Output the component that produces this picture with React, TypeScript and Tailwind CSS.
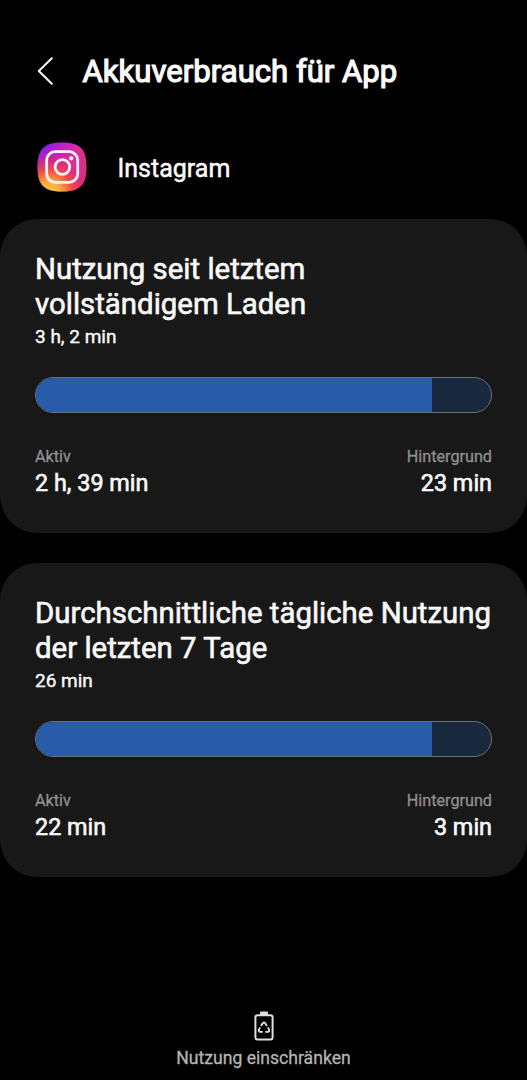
type UsageCardProps = {
  title: string;
  total: string;
  active: string;
  background: string;
  percent: number;
};

const cards: UsageCardProps[] = [
  {
    title: "Nutzung seit letztem vollständigem Laden",
    total: "3 h, 2 min",
    active: "2 h, 39 min",
    background: "23 min",
    percent: 87.1,
  },
  {
    title: "Durchschnittliche tägliche Nutzung der letzten 7 Tage",
    total: "26 min",
    active: "22 min",
    background: "3 min",
    percent: 87.1,
  },
];

function InstagramIcon() {
  return (
    <svg width="50" height="50" viewBox="0 0 50 50">
      <defs>
        <linearGradient id="igBase" x1="0" y1="0" x2="1" y2="0.5">
          <stop offset="0" stopColor="#6a1ff0" />
          <stop offset="0.4" stopColor="#b524c8" />
          <stop offset="0.75" stopColor="#dd2f9a" />
          <stop offset="1" stopColor="#dc2c88" />
        </linearGradient>
        <radialGradient id="igGlow" cx="0.25" cy="1.02" r="0.95">
          <stop offset="0" stopColor="#fdc63c" />
          <stop offset="0.22" stopColor="#fbb03c" />
          <stop offset="0.48" stopColor="#f2503f" stopOpacity="0.95" />
          <stop offset="0.7" stopColor="#e02c6c" stopOpacity="0.6" />
          <stop offset="0.95" stopColor="#d42a90" stopOpacity="0" />
        </radialGradient>
      </defs>
      <path
        d="M25 0.5C43 0.5 49.5 7 49.5 25S43 49.5 25 49.5 0.5 43 0.5 25 7 0.5 25 0.5Z"
        fill="url(#igBase)"
      />
      <path
        d="M25 0.5C43 0.5 49.5 7 49.5 25S43 49.5 25 49.5 0.5 43 0.5 25 7 0.5 25 0.5Z"
        fill="url(#igGlow)"
      />
      <g fill="none" stroke="#fff0f6" strokeWidth="2.8">
        <rect x="9.7" y="9.7" width="31" height="30.6" rx="8.5" />
        <circle cx="25.4" cy="25" r="7.3" />
      </g>
      <circle cx="34.2" cy="16.3" r="2.1" fill="#fff0f6" />
    </svg>
  );
}

function BatteryIcon() {
  return (
    <svg width="20" height="30" viewBox="0 0 20 30" fill="none" stroke="#dedede">
      <rect x="6" y="0.6" width="8" height="4" rx="1" fill="#dedede" stroke="none" />
      <rect x="1.4" y="4.2" width="17.2" height="24.2" rx="2.2" strokeWidth="2" />
      <g strokeWidth="1.9" strokeLinejoin="round">
        <path d="M6.9 14.9 8.9 12.1Q10 11 11.1 12.1L12.9 14.9" />
        <path d="M13.9 16.4 15.1 18.6Q15.5 20.8 13.8 20.9H11.2" />
        <path d="M8.8 20.9H6.2Q4.5 20.8 4.9 18.6L6.1 16.4" />
      </g>
    </svg>
  );
}

function UsageCard({ title, total, active, background, percent }: UsageCardProps) {
  return (
    <section className="h-[314px] rounded-[37px] bg-[#181818] px-[35px] pt-[33px]">
      <h2 className="text-[29.4px] leading-[35px] font-normal [-webkit-text-stroke:0.6px_#fafafa]">{title}</h2>
      <p className="text-[19px] leading-[29px] [-webkit-text-stroke:0.4px_#fafafa]">{total}</p>
      <div className="mt-[26px] h-9 overflow-hidden rounded-full border border-[#68727d] bg-[#18283d]">
        <div className="h-full bg-[#285ba8]" style={{ width: `${percent}%` }} />
      </div>
      <div className="mt-8 flex justify-between">
        <div>
          <p className="text-[16.2px] leading-6 text-[#8f8f8f] [-webkit-text-stroke:0.3px_#8f8f8f]">Aktiv</p>
          <p className="text-[23.4px] leading-7 [-webkit-text-stroke:0.6px_#fafafa]">{active}</p>
        </div>
        <div className="text-right">
          <p className="text-[16.2px] leading-6 text-[#8f8f8f] [-webkit-text-stroke:0.3px_#8f8f8f]">Hintergrund</p>
          <p className="text-[23.4px] leading-7 [-webkit-text-stroke:0.6px_#fafafa]">{background}</p>
        </div>
      </div>
    </section>
  );
}

export default function App() {
  return (
    <main className="flex h-[1080px] w-full flex-col bg-black font-[Roboto,sans-serif] text-[#fafafa]">
      <header className="flex items-start pt-[50px] pl-[37px]">
        <svg className="mt-[7px]" width="17" height="28" viewBox="0 0 17 28" fill="none" stroke="#fafafa" strokeWidth="2" strokeLinecap="round" strokeLinejoin="round">
          <path d="M14.8 1.2 1.8 14 14.8 26.8" />
        </svg>
        <h1 className="ml-[28.5px] pt-px text-[31.1px] leading-[42px] font-normal [-webkit-text-stroke:1.2px_#fafafa]">
          Akkuverbrauch für App
        </h1>
      </header>

      <div className="mt-[49px] flex items-center pl-[36.5px]">
        <InstagramIcon />
        <span className="ml-[31px] pt-1 text-[25px] leading-[46px] [-webkit-text-stroke:0.5px_#fafafa]">Instagram</span>
      </div>

      <div className="mt-[27px] flex flex-col gap-[30px]">
        {cards.map((card) => (
          <UsageCard key={card.title} {...card} />
        ))}
      </div>

      <button className="mt-auto flex flex-col items-center pb-[10px]">
        <BatteryIcon />
        <span className="mt-[5px] text-[17.6px] leading-6 text-[#b4b4b4] [-webkit-text-stroke:0.3px_#b4b4b4]">
          Nutzung einschränken
        </span>
      </button>
    </main>
  );
}
